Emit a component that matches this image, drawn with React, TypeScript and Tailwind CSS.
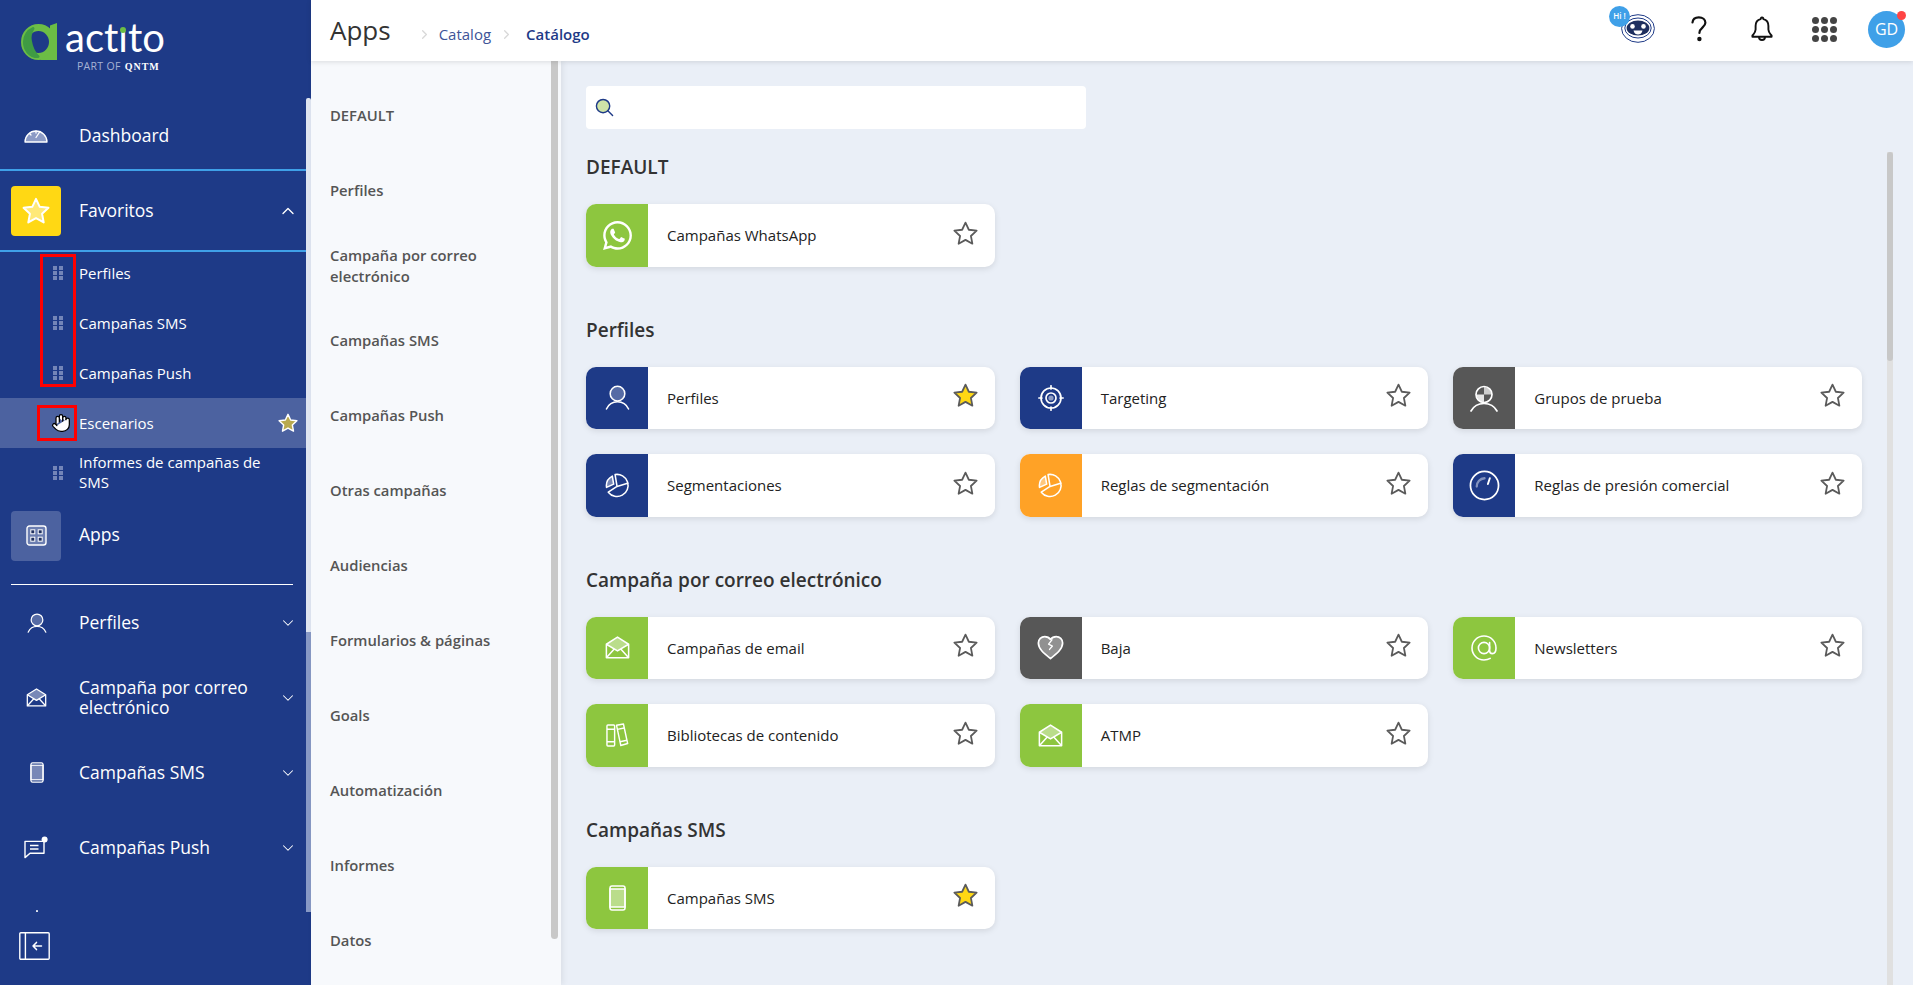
import type { ReactNode } from "react";
import { ChevronDown, ChevronRight, ChevronUp, Hand } from "lucide-react";
import { FaWhatsapp } from "react-icons/fa";

// icons shared by the sidebar and the app cards
const UserIcon = ({ className = "w-[25px] h-[25px]" }: { className?: string }) => (
  <svg viewBox="0 0 26 26" fill="none" stroke="currentColor" strokeWidth="1.6" strokeLinecap="round" className={className}>
    <circle cx="13" cy="9" r="7.6" fill="currentColor" fillOpacity="0.25" />
    <path d="M1.5 25C4 19.5 8.5 17.5 13 17.5S22 19.5 24.5 25" />
  </svg>
);

const PieIcon = () => (
  <svg viewBox="0 0 26 26" fill="none" stroke="currentColor" strokeWidth="1.6" strokeLinejoin="round" className="w-[25px] h-[25px]">
    <path d="M10.5 1.6A11.5 11.5 0 1 1 3.4 20L12.5 14Z" />
    <path d="M12.5 14L24.4 10.5" />
    <path d="M7.6 3.2A11.5 11.5 0 0 0 1.6 15L9 11.6Z" fill="currentColor" fillOpacity="0.4" />
  </svg>
);

const TargetIcon = () => (
  <svg viewBox="0 0 26 26" fill="none" stroke="currentColor" strokeWidth="1.7" strokeLinecap="round" className="w-[26px] h-[26px]">
    <circle cx="13" cy="13" r="10" />
    <circle cx="13" cy="13" r="5" />
    <circle cx="13" cy="13" r="2.6" fill="currentColor" fillOpacity="0.5" stroke="none" />
    <path d="M13 .8V4M13 22V25.2M.8 13H4M22 13H25.2" />
  </svg>
);

const TestGroupIcon = () => (
  <svg viewBox="0 0 28 28" fill="none" stroke="currentColor" strokeWidth="1.7" strokeLinecap="round" className="w-[28px] h-[28px]">
    <path d="M14 3A7.5 7.5 0 0 1 21.5 10.5H14Z" fill="currentColor" fillOpacity="0.7" stroke="none" />
    <path d="M14 18A7.5 7.5 0 0 1 6.5 10.5H14Z" fill="currentColor" fillOpacity="0.85" stroke="none" />
    <circle cx="14" cy="10.5" r="8" />
    <path d="M1 27C4 21.5 9 19.5 14 19.5S24 21.5 27 27" />
  </svg>
);

const GaugeIcon = () => (
  <svg viewBox="0 0 32 32" fill="none" stroke="currentColor" strokeWidth="1.8" strokeLinecap="round" className="w-[31px] h-[31px]">
    <circle cx="16" cy="16" r="14.5" />
    <path d="M8 17A8.5 8.5 0 0 1 16 8.5" strokeOpacity="0.45" strokeWidth="2.4" />
    <path d="M21.5 8.5L19.5 14.5" strokeWidth="2" />
  </svg>
);

const MailOpenIcon = ({ className = "w-[25px] h-[23px]" }: { className?: string }) => (
  <svg viewBox="0 0 26 24" fill="none" stroke="currentColor" strokeWidth="1.6" strokeLinejoin="round" className={className}>
    <path d="M1.4 8.6L13 1.2L24.6 8.6L13 16Z" fill="currentColor" fillOpacity="0.4" stroke="none" />
    <path d="M1.4 8.6L13 1.2L24.6 8.6V22.6H1.4Z" />
    <path d="M1.4 8.6L13 15.6L24.6 8.6M1.6 22.4L9.6 13.6M24.4 22.4L16.4 13.6" />
  </svg>
);

const BooksIcon = () => (
  <svg viewBox="0 0 24 25" fill="none" stroke="currentColor" strokeWidth="1.5" strokeLinejoin="round" className="w-[23px] h-[24px]">
    <rect x="1" y="2" width="8" height="22" rx="1" />
    <path d="M1 6.5H9M1 19.5H9" />
    <path d="M11 2.4L18.2 1L22.6 21.4L15.4 23.4Z" />
    <path d="M11.8 6.6L19 5.2M14.6 19.6L21.8 18" />
  </svg>
);

const PhoneIcon = ({ className = "w-[17px] h-[26px]" }: { className?: string }) => (
  <svg viewBox="0 0 17 26" fill="none" stroke="currentColor" strokeWidth="1.5" className={className}>
    <rect x="1" y="1" width="15" height="24" rx="2" />
    <rect x="1" y="4" width="15" height="18" fill="currentColor" fillOpacity="0.4" />
  </svg>
);

const HeartBreakIcon = () => (
  <svg viewBox="0 0 28 26" fill="none" stroke="currentColor" strokeWidth="1.8" strokeLinejoin="round" className="w-[27px] h-[25px]">
    <path d="M14 24.5C7 19 1.4 14.5 1.4 8.4C1.4 4.4 4.4 1.6 8 1.6C10.4 1.6 12.6 2.6 14 4.6C15.4 2.6 17.6 1.6 20 1.6C23.6 1.6 26.6 4.4 26.6 8.4C26.6 14.5 21 19 14 24.5Z" fill="currentColor" fillOpacity="0.35" />
    <path d="M15.5 5L12 9.5L16 11.5L13 15" strokeWidth="1.4" strokeLinecap="round" />
  </svg>
);

const AtIcon = () => (
  <svg viewBox="0 0 26 26" fill="none" stroke="currentColor" strokeWidth="1.6" strokeLinecap="round" className="w-[26px] h-[26px]">
    <circle cx="13" cy="13" r="5.6" />
    <path d="M18.6 7.6V15.4C18.6 17.6 20 18.6 21.4 18.6C23.4 18.6 25 16.6 25 13C25 6.4 19.6 1 13 1S1 6.4 1 13S6.4 25 13 25C15.6 25 17.6 24.4 19.2 23.4" />
  </svg>
);

const StarIcon = ({ fill = "none", stroke = "#5b5b5b", className = "w-[25px] h-[25px]" }: { fill?: string; stroke?: string; className?: string }) => (
  <svg viewBox="0 0 24 24" fill={fill} stroke={stroke} strokeWidth="1.7" strokeLinejoin="round" className={className}>
    <path d="M12 1.6L15.2 8.4L22.7 9.3L17.2 14.4L18.6 21.8L12 18.1L5.4 21.8L6.8 14.4L1.3 9.3L8.8 8.4Z" />
  </svg>
);

const DashboardIcon = () => (
  <svg viewBox="0 0 24 16" fill="none" stroke="#fff" strokeWidth="1.3" strokeLinecap="round" strokeLinejoin="round" className="w-[24px] h-[16px]">
    <path d="M1 15A11 11 0 0 1 23 15Z" fill="#8b9ac5" />
    <path d="M12 10.5L16 4.5M5.5 6.5L7 8M12 4V6" />
  </svg>
);

const AppsIcon = () => (
  <svg viewBox="0 0 21 21" fill="none" className="w-[21px] h-[21px]">
    <rect x="1" y="1" width="19" height="19" rx="2.5" fill="#ffffff" fillOpacity="0.18" stroke="#fff" strokeWidth="1.4" />
    <rect x="4.8" y="4.8" width="4" height="4" fill="#1e2f5f" stroke="#fff" strokeWidth="1" />
    <rect x="12.2" y="4.8" width="4" height="4" fill="#1e2f5f" stroke="#fff" strokeWidth="1" />
    <rect x="4.8" y="12.2" width="4" height="4" fill="#1e2f5f" stroke="#fff" strokeWidth="1" />
    <rect x="12.2" y="12.2" width="4" height="4" fill="#1e2f5f" stroke="#fff" strokeWidth="1" />
  </svg>
);

const PushIcon = () => (
  <svg viewBox="0 0 25 23" fill="none" stroke="#fff" strokeWidth="1.4" strokeLinejoin="round" className="w-[25px] h-[23px]">
    <path d="M1 5.4H20V17.2H6L1 21.6Z" />
    <path d="M6 9.4H14.5M6 13H14.5" strokeWidth="1.5" />
    <circle cx="20.6" cy="3.4" r="3" fill="#fff" stroke="none" />
  </svg>
);

const CollapseIcon = () => (
  <svg viewBox="0 0 31 28" fill="none" stroke="#fff" strokeWidth="1.4" strokeLinecap="round" strokeLinejoin="round" className="w-[31px] h-[28px]">
    <rect x=".8" y=".8" width="29.4" height="26.4" rx="1" />
    <path d="M6.4 1V27" />
    <path d="M22.5 14H14M17.5 10.4L14 14L17.5 17.6" strokeWidth="1.5" />
  </svg>
);

const BotIcon = () => (
  <svg viewBox="0 0 34 29" fill="none" className="w-[34px] h-[29px]">
    <ellipse cx="17" cy="14.5" rx="16.4" ry="13.8" stroke="#1e3a87" strokeWidth="1" />
    <ellipse cx="17" cy="14" rx="13.2" ry="10" stroke="#1e3a87" strokeWidth="1" />
    <ellipse cx="17" cy="14" rx="11.4" ry="7.6" fill="#1e2f5f" />
    <circle cx="11.5" cy="12.4" r="2.3" fill="#fff" />
    <circle cx="22.5" cy="12.4" r="2.3" fill="#fff" />
    <path d="M12.5 16.4H21.5C20.8 19.4 18.8 20.4 17 20.4S13.2 19.4 12.5 16.4Z" fill="#fff" />
  </svg>
);

const BellIcon = () => (
  <svg viewBox="0 0 22 26" fill="none" stroke="#111" strokeWidth="1.9" strokeLinejoin="round" className="w-[22px] h-[26px]">
    <path d="M11 1.5C11.9 1.5 12.4 2.2 12.4 3.2C15.8 4 17.4 6.6 17.4 10V13.6C17.4 16.4 19.4 18 20.6 19.6V20.8H1.4V19.6C2.6 18 4.6 16.4 4.6 13.6V10C4.6 6.6 6.2 4 9.6 3.2C9.6 2.2 10.1 1.5 11 1.5Z" />
    <path d="M8 21A3 3 0 0 0 14 21" />
  </svg>
);

const QuestionIcon = () => (
  <svg viewBox="0 0 16 26" fill="none" stroke="#111" strokeWidth="2.2" strokeLinecap="round" className="w-[16px] h-[26px]">
    <path d="M1.5 6.5C1.8 3.4 4.4 1.4 7.8 1.4C11.6 1.4 14.4 3.6 14.4 6.8C14.4 11.2 8.4 11.6 8.4 17" />
    <circle cx="8.4" cy="23" r="2.2" fill="#111" stroke="none" />
  </svg>
);

// actito brand mark: ring with a stem on its right
const LogoMark = () => (
  <svg viewBox="0 0 36 37" fill="none" className="w-[36px] h-[37px] shrink-0">
    <ellipse cx="17.5" cy="19" rx="14" ry="14.5" stroke="#6cbd45" strokeWidth="7" />
    <path d="M17 33.6C8 33.6 3.4 26 3.4 19C3.4 13 7 7.6 12 5.6C9 10 8.6 14 9.4 18C10.4 24 13 30 17 33.6Z" fill="#3f9b44" stroke="#3f9b44" strokeWidth="3" strokeLinejoin="round" />
    <path d="M29 2.5L36 0V37H19L29 30Z" fill="#6cbd45" />
  </svg>
);

const Grip = () => (
  <div className="grid grid-cols-2 gap-x-[2px] gap-y-[1px] w-[10px]">
    {[0, 1, 2, 3, 4, 5].map((i) => (
      <span key={i} className="w-[4px] h-[4px] bg-[#7485b8]" />
    ))}
  </div>
);

// component: collapsible sidebar entry //
const NavRow = ({ icon, label }: { icon: ReactNode; label?: string }) => (
  <div className="flex items-center h-[75px] shrink-0">
    <div className="w-[72px] pl-[1px] flex justify-center shrink-0 text-white">{icon}</div>
    <div className="ml-[7px] w-[201px] text-[17.5px] leading-[20px] text-white mt-[-1px]">{label}</div>
    <ChevronDown className="w-[18px] h-[18px] text-white ml-[-1px]" strokeWidth={1.4} />
  </div>
);

const FavRow = ({ label, hand, active, two }: { label: string; hand?: boolean; active?: boolean; two?: boolean }) => (
  <div className={`flex items-center h-[50px] relative ${active ? "bg-[#4c62a0]" : ""}`}>
    <div className="w-[79px] pl-[53px] shrink-0 flex items-center">
      {hand ? <Hand className="w-[20px] h-[20px] ml-[-2px] text-black" fill="#fff" strokeWidth={1.5} /> : <Grip />}
    </div>
    <span className={`text-[15px] text-white ${two ? "leading-[20px] w-[190px] mt-[-3px]" : "leading-[20px] mt-[-1px]"}`}>{label}</span>
    {active && (
      <StarIcon fill="#b8a94f" stroke="#fff" className="w-[20px] h-[20px] absolute left-[278px] top-[15px]" />
    )}
  </div>
);

const Sidebar = () => (
  <aside className="w-[311px] h-full shrink-0 bg-[#1e3a87] flex flex-col relative">
    {/* logo */}
    <div className="h-[98px] shrink-0 flex pl-[21px] pt-[23px]">
      <LogoMark />
      <div className="ml-[8px] flex flex-col mt-[-6px]">
        <span className="font-['Lato',sans-serif] text-[40px] leading-[40px] text-white flex">
          act<span className="relative">ı<span className="absolute left-[2px] top-[10px] w-[6px] h-[6px] rounded-full bg-[#6cbd45]" /></span>to
        </span>
        <span className="mt-[3px] ml-[12px] text-[10.5px] leading-[13px] tracking-[0.3px] text-[#a6b2d4] flex items-center whitespace-nowrap">
          PART OF
          <span className="ml-[4px] font-['Liberation_Serif',serif] text-white text-[10px] font-bold tracking-[1px]">QNTM</span>
        </span>
      </div>
    </div>

    {/* menu and its scrollbar */}
    <div className="h-[814px] shrink-0 flex overflow-hidden">
      <nav className="w-[306px] shrink-0 flex flex-col overflow-hidden">
        <div className="h-[71px] shrink-0 flex items-center pt-[3px]">
          <div className="w-[72px] flex justify-center shrink-0"><DashboardIcon /></div>
          <span className="ml-[7px] text-[17.5px] text-white">Dashboard</span>
        </div>
        <div className="h-[83px] shrink-0 flex items-center border-y-2 border-[#3fa0e8] pl-[11px]">
          <div className="w-[50px] h-[50px] rounded-[4px] bg-[#ffd814] flex items-center justify-center">
            <StarIcon fill="#ffe978" stroke="#fff" className="w-[28px] h-[28px]" />
          </div>
          <span className="ml-[18px] text-[17.5px] text-white w-[199px] mt-[-1px]">Favoritos</span>
          <ChevronUp className="w-[20px] h-[20px] text-white" strokeWidth={1.6} />
        </div>
        <div className="mt-[-4px] shrink-0">
          <FavRow label="Perfiles" />
          <FavRow label="Campañas SMS" />
          <FavRow label="Campañas Push" />
          <FavRow label="Escenarios" hand active />
          <FavRow label="Informes de campañas de SMS" two />
        </div>
        <div className="h-[75px] shrink-0 flex items-center pl-[11px]">
          <div className="w-[50px] h-[50px] rounded-[4px] bg-[#4c62a0] flex items-center justify-center">
            <AppsIcon />
          </div>
          <span className="ml-[18px] text-[17.5px] text-white mt-[-2px]">Apps</span>
        </div>
        <div className="h-px shrink-0 bg-white mx-[11px] mt-[11px] w-[282px]" />
        <NavRow icon={<UserIcon className="w-[20px] h-[20px]" />} label="Perfiles" />
        <NavRow icon={<MailOpenIcon className="w-[21px] h-[19px]" />} label="Campaña por correo electrónico" />
        <NavRow icon={<PhoneIcon className="w-[14px] h-[21px]" />} label="Campañas SMS" />
        <NavRow icon={<PushIcon />} label="Campañas Push" />
        {/* next entry, scrolled almost out of view */}
        <NavRow icon={<TargetIcon />} />
      </nav>
      <div className="w-[5px] shrink-0 flex flex-col rounded-t-[2px] overflow-hidden">
        <div className="flex-1 bg-[#dfe5f1]" />
        <div className="h-[280px] bg-[#8899c5]" />
      </div>
    </div>

    <div className="pl-[19px] pt-[20px]">
      <CollapseIcon />
    </div>

    {/* red marks around the drag handles */}
    <div className="absolute left-[40px] top-[254px] w-[36px] h-[133px] border-[3px] border-[#ff0000]" />
    <div className="absolute left-[37px] top-[405px] w-[40px] h-[36px] border-[3px] border-[#ff0000]" />
  </aside>
);

const Header = () => (
  <header className="h-[61px] shrink-0 bg-white shadow-[0_1px_5px_rgba(0,0,0,0.12)] relative z-10 flex items-center">
    <h1 className="ml-[19px] text-[26px] leading-[34px] text-[#333] mt-[-2px]">Apps</h1>
    <ChevronRight className="ml-[26px] mt-[8px] w-[15px] h-[15px] text-[#d8d8d8]" strokeWidth={2} />
    <span className="ml-[7px] text-[15px] text-[#3e5498] mt-[8px]">Catalog</span>
    <ChevronRight className="ml-[8px] mt-[8px] w-[15px] h-[15px] text-[#d8d8d8]" strokeWidth={2} />
    <span className="ml-[12px] text-[15px] font-semibold text-[#1e3a87] mt-[8px]">Catálogo</span>

    <div className="ml-auto flex items-center relative h-full">
      <div className="relative mr-[36px] mt-[-5px]">
        <BotIcon />
        <span className="absolute left-[-12px] top-[-8px] w-[21px] h-[21px] rounded-full bg-[#3fa0e8] text-white text-[8px] font-semibold flex items-center justify-center">Hi !</span>
      </div>
      <div className="mr-[44px] mt-[-3px]"><QuestionIcon /></div>
      <div className="mr-[39px] mt-[-3px]"><BellIcon /></div>
      <div className="mr-[31px] grid grid-cols-3 gap-[2px] mt-[-3px]">
        {[0, 1, 2, 3, 4, 5, 6, 7, 8].map((i) => (
          <span key={i} className="w-[7px] h-[7px] rounded-full bg-[#444]" />
        ))}
      </div>
      <div className="mr-[8px] relative w-[37px] h-[37px] rounded-full bg-[#3fa0e8] text-white text-[16px] flex items-center justify-center mt-[-3px]">
        GD
        <span className="absolute right-[-1px] top-0 w-[9px] h-[9px] rounded-full bg-[#ff4444]" />
      </div>
    </div>
  </header>
);

const categories = [
  "DEFAULT",
  "Perfiles",
  "Campaña por correo electrónico",
  "Campañas SMS",
  "Campañas Push",
  "Otras campañas",
  "Audiencias",
  "Formularios & páginas",
  "Goals",
  "Automatización",
  "Informes",
  "Datos",
];

const CategoryPanel = () => (
  <div className="w-[250px] shrink-0 bg-[#f7f9fc] flex shadow-[2px_0_6px_rgba(0,0,0,0.07)] relative overflow-hidden">
    <ul className="w-[240px] shrink-0 pt-[17px] pl-[19px] pr-[10px]">
      {categories.map((c) => (
        <li key={c} className="h-[75px] flex items-center text-[14.8px] leading-[21px] font-semibold text-[#555]">
          {c}
        </li>
      ))}
    </ul>
    <div className="w-[7px] h-[878px] bg-[#c8c8c8] rounded-b-[4px]" />
  </div>
);

type Card = { name: string; color: string; icon: ReactNode; fav?: boolean };

const sections: { title: string; cards: Card[] }[] = [
  {
    title: "DEFAULT",
    cards: [{ name: "Campañas WhatsApp", color: "bg-[#8dc63f]", icon: <FaWhatsapp className="w-[33px] h-[33px]" /> }],
  },
  {
    title: "Perfiles",
    cards: [
      { name: "Perfiles", color: "bg-[#1e3a87]", icon: <UserIcon />, fav: true },
      { name: "Targeting", color: "bg-[#1e3a87]", icon: <TargetIcon /> },
      { name: "Grupos de prueba", color: "bg-[#575757]", icon: <TestGroupIcon /> },
      { name: "Segmentaciones", color: "bg-[#1e3a87]", icon: <PieIcon /> },
      { name: "Reglas de segmentación", color: "bg-[#ffa226]", icon: <PieIcon /> },
      { name: "Reglas de presión comercial", color: "bg-[#1e3a87]", icon: <GaugeIcon /> },
    ],
  },
  {
    title: "Campaña por correo electrónico",
    cards: [
      { name: "Campañas de email", color: "bg-[#8dc63f]", icon: <MailOpenIcon /> },
      { name: "Baja", color: "bg-[#575757]", icon: <HeartBreakIcon /> },
      { name: "Newsletters", color: "bg-[#8dc63f]", icon: <AtIcon /> },
      { name: "Bibliotecas de contenido", color: "bg-[#8dc63f]", icon: <BooksIcon /> },
      { name: "ATMP", color: "bg-[#8dc63f]", icon: <MailOpenIcon /> },
    ],
  },
  {
    title: "Campañas SMS",
    cards: [{ name: "Campañas SMS", color: "bg-[#8dc63f]", icon: <PhoneIcon />, fav: true }],
  },
];

// component: app shortcut card //
const AppCard = ({ card }: { card: Card }) => (
  <div className="h-[62.5px] bg-white rounded-[10px] overflow-hidden flex items-center shadow-[0_2px_6px_rgba(0,0,0,0.1)]">
    <div className={`w-[62px] h-full shrink-0 flex items-center justify-center text-white ${card.color}`}>{card.icon}</div>
    <span className="ml-[19px] text-[15px] text-[#222] flex-1">{card.name}</span>
    <div className="mr-[17px] mt-[-4px]">
      <StarIcon fill={card.fav ? "#ffd814" : "none"} />
    </div>
  </div>
);

const Catalog = () => (
  <main className="flex-1 bg-[#eaeff7] flex overflow-hidden">
    <div className="flex-1 pl-[25px] pr-[25px] pt-[25px] overflow-hidden">
      <div className="w-[500px] h-[43px] bg-white rounded-[4px] flex items-center pl-[9px]">
        <svg viewBox="0 0 20 20" fill="none" className="w-[19px] h-[19px]">
          <circle cx="8.5" cy="8.5" r="7" fill="#cfe4a8" stroke="#1e3a87" strokeWidth="1.5" />
          <path d="M13.5 13.5L18.5 18.5" stroke="#1e3a87" strokeWidth="1.5" strokeLinecap="round" />
        </svg>
      </div>
      <div className="mt-[26px] flex flex-col gap-[51px]">
        {sections.map((s) => (
          <section key={s.title}>
            <h2 className="text-[19px] leading-[24px] font-semibold text-[#333] mb-[25px]">{s.title}</h2>
            <div className="grid grid-cols-3 gap-[25px]">
              {s.cards.map((c) => (
                <AppCard key={c.name} card={c} />
              ))}
            </div>
          </section>
        ))}
      </div>
    </div>
    <div className="w-[6px] shrink-0 mt-[91px] mr-[20px] bg-[#e0e0e0] flex flex-col">
      <div className="h-[209px] bg-[#c8c8c8] rounded-[3px]" />
    </div>
  </main>
);

export default function App() {
  return (
    <div className="w-full h-screen flex overflow-hidden font-['Open_Sans',sans-serif]">
      <Sidebar />
      <div className="flex-1 min-w-0 flex flex-col">
        <Header />
        <div className="flex-1 min-h-0 flex">
          <CategoryPanel />
          <Catalog />
        </div>
      </div>
    </div>
  );
}
